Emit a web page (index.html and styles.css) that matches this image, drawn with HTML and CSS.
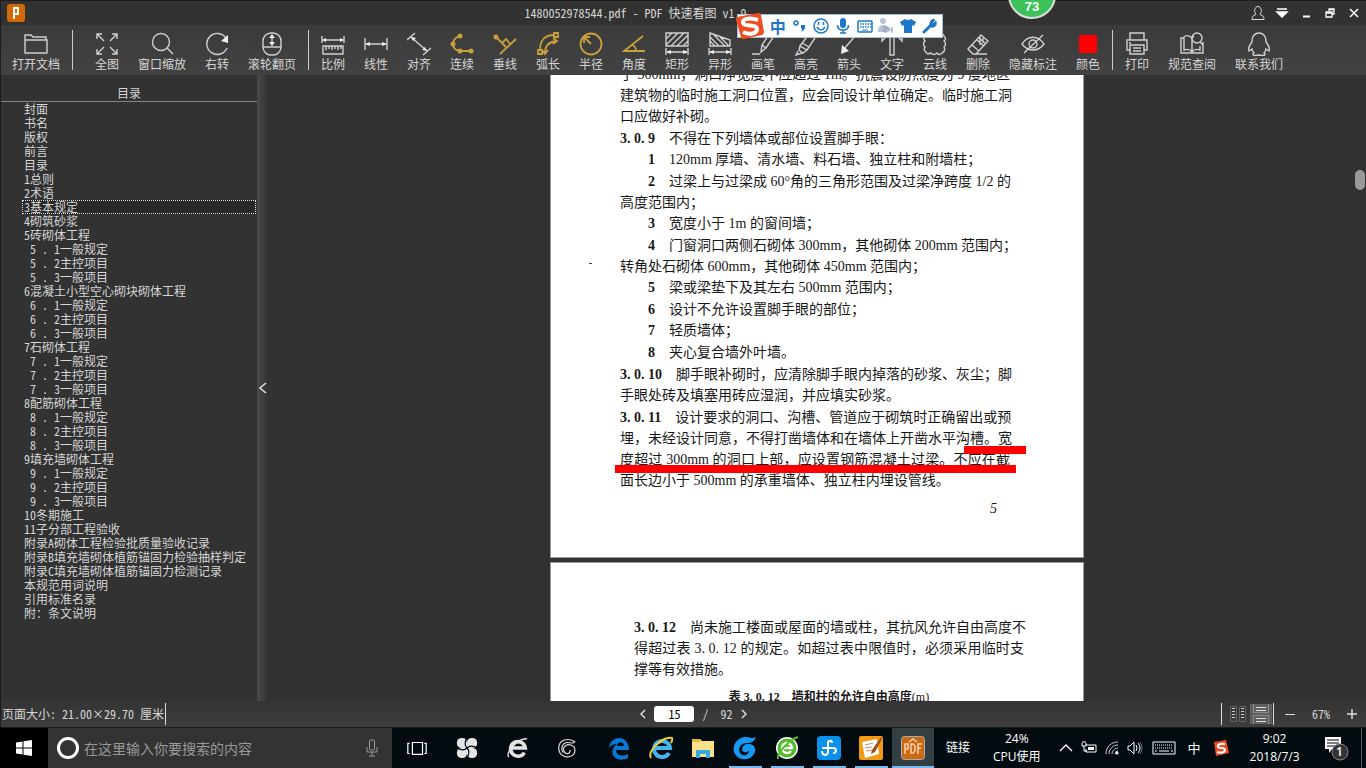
FILE: index.html
```html
<!DOCTYPE html>
<html lang="zh-CN">
<head>
<meta charset="utf-8">
<title>1480052978544.pdf - PDF 快速看图 v1.9</title>
<link rel="stylesheet" href="styles.css">
</head>
<body>
<div class="desktop">
<div class="window">
  <header class="titlebar">
    <svg class="app-icon" viewBox="0 0 18 18"><rect width="18" height="18" rx="3" fill="#d26a08"/><path d="M7 15V4h4v6H8" fill="none" stroke="#fff" stroke-width="2"/></svg>
    <h1 class="title">1480052978544.pdf - PDF 快速看图 v1.9</h1>
    <div class="controls">
      <button aria-label="用户"><svg viewBox="0 0 16 16"><path d="M5.500 8.500C4 7 4.500 1.500 8 1.500S12 7 10.500 8.500L10 9.500c3 1 4 2 4 5H2c0-3 1-4 4-5z" fill="none" stroke="#ddd"/></svg></button>
      <button aria-label="菜单"><svg viewBox="0 0 16 16"><path d="M3 4h10M3 7h10l-5 5z" fill="#fff" stroke="#fff" stroke-width="1.500"/></svg></button>
      <button aria-label="最小化"><svg viewBox="0 0 16 16"><path d="M5 11.500h7" stroke="#fff" stroke-width="2"/></svg></button>
      <button aria-label="还原"><svg viewBox="0 0 16 16"><path d="M7 6V4h5v5h-2M4 7h6v5H4zM4 8h6M7 4.500h5" fill="none" stroke="#fff" stroke-width="1.300"/></svg></button>
      <button aria-label="关闭"><svg viewBox="0 0 16 16"><path d="M4 4l8 8M12 4l-8 8" stroke="#fff" stroke-width="1.500"/></svg></button>
    </div>
  </header>

  <nav class="toolbar">
    <div class="group">
      <button class="tool wide"><svg viewBox="0 0 24 24"><path d="M1 21V3h6l2 2h13v3M1 8h22v13H1z"/></svg>打开文档</button>
    </div>
    <i class="sep"></i>
    <div class="group fit">
      <button class="tool"><svg viewBox="0 0 24 24"><path d="M9 9L2 2M2 7V2h5M15 9l7-7M17 2h5v5M9 15l-7 7M2 17v5h5M15 15l7 7M22 17v5h-5"/></svg>全图</button>
      <button class="tool wide"><svg viewBox="0 0 24 24"><circle cx="11" cy="10" r="8.500"/><path d="M17 16l6 6"/></svg>窗口缩放</button>
      <button class="tool"><svg viewBox="0 0 24 24"><path d="M21 6A10.500 10.500 0 1 0 22 16"/><path class="solid" d="M23 3v8l-7-2z"/></svg>右转</button>
      <button class="tool wide"><svg viewBox="0 0 24 24"><rect x="3" y="1" width="18" height="22" rx="8"/><path d="M3 15h18M12 4v8"/><path class="solid" d="M12 2l3 4H9zM12 14l3-4H9z"/></svg>滚轮翻页</button>
    </div>
    <i class="sep"></i>
    <div class="group">
      <button class="tool"><svg viewBox="0 0 24 24"><path d="M1 4v7M23 4v7M2 8h20M2 14h20v8H2zM5 14v4M8 14v3M11 14v4M14 14v3M17 14v4M20 14v3"/><path class="solid" d="M1 8l4-2v4zM23 8l-4-2v4z"/></svg>比例</button>
      <button class="tool"><svg viewBox="0 0 24 24"><path d="M1 6v12M23 6v12M2 12h20"/><path class="solid" d="M1 12l5-2v4zM23 12l-5-2v4z"/></svg>线性</button>
      <button class="tool"><svg viewBox="0 0 24 24"><path d="M0 8l8-7M16 23l8-7M4 5l16 14"/><path class="solid" d="M4 5l5 1-3 3zM20 19l-5-1 3-3z"/></svg>对齐</button>
      <button class="tool gold"><svg viewBox="0 0 24 24"><path d="M10 4Q3 6 3 12t7 7h11"/><circle class="solid" cx="10" cy="4" r="2.500"/><circle class="solid" cx="3" cy="12" r="2.500"/><circle class="solid" cx="10" cy="19" r="2.500"/><circle class="solid" cx="21" cy="19" r="2.500"/></svg>连续</button>
      <button class="tool gold"><svg viewBox="0 0 24 24"><path d="M3 5l11 11M7 22L23 7M9 11l4-4 4 5"/><circle class="solid" cx="3" cy="5" r="2.500"/></svg>垂线</button>
      <button class="tool gold"><svg viewBox="0 0 24 24"><path d="M4 18C4 8 9 3 18 3M9 21c0-8 4-11 11-12M2 18h4v4H2zM18 1h4v4h-4zM17 6l4 3-4 3M6 18l3 4 3-4"/></svg>弧长</button>
      <button class="tool gold"><svg viewBox="0 0 24 24"><circle cx="12" cy="12" r="10.500"/><path d="M12 12L5 5M5 11V5h6"/></svg>半径</button>
      <button class="tool gold"><svg viewBox="0 0 24 24"><path d="M21 4L2 19h21M10 13c3 1 4 3 4 6"/></svg>角度</button>
      <button class="tool"><svg viewBox="0 0 24 24"><path d="M1 1h22v13H1zM1 7l6-6M1 13L13 1M6 14L19 1M12 14L23 3M18 14l5-5M1 16v7M23 16v7M2 20h20"/><path class="solid" d="M1 20l5-2v4zM23 20l-5-2v4z"/></svg>矩形</button>
      <button class="tool"><svg viewBox="0 0 24 24"><path d="M2 1l20 7v6H2zM2 5l9 9M2 9l5 5M5 2l12 12M12 5l9 9M1 16v7M23 16v7M2 20h20"/><path class="solid" d="M1 20l5-2v4zM23 20l-5-2v4z"/></svg>异形</button>
      <button class="tool"><svg viewBox="0 0 24 24"><path d="M10 20l1-7 8-12 4 3-8 12zM1 22h8M11 13l4 3"/></svg>画笔</button>
      <button class="tool"><svg viewBox="0 0 24 24"><path d="M6 14l9-12 6 4-8 12zM6 14l-1 4 4 3 4-3M4 19l-2 4 6-2M8 11l7 4"/></svg>高亮</button>
      <button class="tool"><svg viewBox="0 0 24 24"><path d="M20 2L6 18"/><path class="solid" d="M4 22l1-9 7 6z"/></svg>箭头</button>
      <button class="tool"><svg viewBox="0 0 24 24"><path d="M2 3h20v6l-4-4h-4v18h-4V5H6L2 9z"/></svg>文字</button>
      <button class="tool"><svg viewBox="0 0 24 24"><path d="M4 3q3-3 5 0 3-3 6 0 4-3 6 1 3 3 0 5 3 3 0 6 2 4-2 6-3 3-5 0-3 3-6 0-4 2-5-1-3-2-1-5-3-3 0-6-3-3 2-6z"/></svg>云线</button>
      <button class="tool"><svg viewBox="0 0 24 24"><path d="M2 17L15 3l7 6L10 22H7zM6 13l7 6M7 22h14M11 8l7 6M13 6l7 6M14 13V5M17 11V6"/></svg>删除</button>
      <button class="tool wide"><svg viewBox="0 0 24 24"><path d="M1 12C7 3 17 3 23 12 17 20 7 20 1 12zM3 21L22 3"/><circle cx="12" cy="12" r="4"/></svg>隐藏标注</button>
      <button class="tool"><svg viewBox="0 0 24 24"><rect x="3" y="3" width="18" height="18" rx="2" fill="#f00" stroke="none"/></svg>颜色</button>
    </div>
    <i class="sep"></i>
    <div class="group">
      <button class="tool"><svg viewBox="0 0 24 24"><path d="M5 8V1h14v7M5 18H2V8h20v10h-3M5 13h14v9H5zM8 16h8M8 19h8M4 11h2"/></svg>打印</button>
      <button class="tool wide"><svg viewBox="0 0 24 24"><path d="M12 21V6C9 3 6 3 4 5v13c3-1 6-1 8 2 2-3 5-3 8-2v-4M4 6H1v15h22V10M12 6l2-2"/><circle cx="17" cy="6" r="5"/><path d="M20 10l3 3"/></svg>规范查阅</button>
      <button class="tool wide"><svg viewBox="0 0 24 24"><path d="M5 10C4-2 20-2 19 10c3 4 4 7 3 9l-3-2c0 2-1 3-2 4 3 2 0 3-5 2-5 1-8 0-5-2-1-1-2-2-2-4l-3 2c-1-2 0-5 3-9z"/></svg>联系我们</button>
    </div>
  </nav>

  <main class="main">
    <aside class="sidebar">
      <h2>目录</h2>
      <ul class="toc">
        <li><a href="#">封面</a></li>
        <li><a href="#">书名</a></li>
        <li><a href="#">版权</a></li>
        <li><a href="#">前言</a></li>
        <li><a href="#">目录</a></li>
        <li><a href="#">1总则</a></li>
        <li><a href="#">2术语</a></li>
        <li><a href="#" class="current">3基本规定</a></li>
        <li><a href="#">4砌筑砂浆</a></li>
        <li><a href="#">5砖砌体工程</a></li>
        <li><a href="#" class="sub">5 . 1一般规定</a></li>
        <li><a href="#" class="sub">5 . 2主控项目</a></li>
        <li><a href="#" class="sub">5 . 3一般项目</a></li>
        <li><a href="#">6混凝土小型空心砌块砌体工程</a></li>
        <li><a href="#" class="sub">6 . 1一般规定</a></li>
        <li><a href="#" class="sub">6 . 2主控项目</a></li>
        <li><a href="#" class="sub">6 . 3一般项目</a></li>
        <li><a href="#">7石砌体工程</a></li>
        <li><a href="#" class="sub">7 . 1一般规定</a></li>
        <li><a href="#" class="sub">7 . 2主控项目</a></li>
        <li><a href="#" class="sub">7 . 3一般项目</a></li>
        <li><a href="#">8配筋砌体工程</a></li>
        <li><a href="#" class="sub">8 . 1一般规定</a></li>
        <li><a href="#" class="sub">8 . 2主控项目</a></li>
        <li><a href="#" class="sub">8 . 3一般项目</a></li>
        <li><a href="#">9填充墙砌体工程</a></li>
        <li><a href="#" class="sub">9 . 1一般规定</a></li>
        <li><a href="#" class="sub">9 . 2主控项目</a></li>
        <li><a href="#" class="sub">9 . 3一般项目</a></li>
        <li><a href="#">10冬期施工</a></li>
        <li><a href="#">11子分部工程验收</a></li>
        <li><a href="#">附录A砌体工程检验批质量验收记录</a></li>
        <li><a href="#">附录B填充墙砌体植筋锚固力检验抽样判定</a></li>
        <li><a href="#">附录C填充墙砌体植筋锚固力检测记录</a></li>
        <li><a href="#">本规范用词说明</a></li>
        <li><a href="#">引用标准名录</a></li>
        <li><a href="#">附：条文说明</a></li>
      </ul>
    </aside>
    <button class="splitter" aria-label="收起目录"><svg viewBox="0 0 8 12"><path d="M7 1L1 6l6 5" fill="none" stroke="#ddd" stroke-width="1.500"/></svg></button>
    <section class="viewer">
      <div class="pages">
        <article class="page first">
          <p class="clause"><span class="full">于 300mm，洞口净宽度不应超过 1m。抗震设防烈度为 9 度地区</span><span class="full">建筑物的临时施工洞口位置，应会同设计单位确定。临时施工洞</span><span>口应做好补砌。</span></p>
          <p class="clause"><span><b>3. 0. 9</b>不得在下列墙体或部位设置脚手眼：</span></p>
          <p class="item"><span><b>1</b>120mm 厚墙、清水墙、料石墙、独立柱和附墙柱；</span></p>
          <p class="item"><span><b>2</b>过梁上与过梁成 60°角的三角形范围及过梁净跨度 1/2 的</span><span>高度范围内；</span></p>
          <p class="item"><span><b>3</b>宽度小于 1m 的窗间墙；</span></p>
          <p class="item"><span><b>4</b>门窗洞口两侧石砌体 300mm，其他砌体 200mm 范围内；</span><span>转角处石砌体 600mm，其他砌体 450mm 范围内；</span></p>
          <p class="item"><span><b>5</b>梁或梁垫下及其左右 500mm 范围内；</span></p>
          <p class="item"><span><b>6</b>设计不允许设置脚手眼的部位；</span></p>
          <p class="item"><span><b>7</b>轻质墙体；</span></p>
          <p class="item"><span><b>8</b>夹心复合墙外叶墙。</span></p>
          <p class="clause"><span><b>3. 0. 10</b>脚手眼补砌时，应清除脚手眼内掉落的砂浆、灰尘；脚</span><span>手眼处砖及填塞用砖应湿润，并应填实砂浆。</span></p>
          <p class="clause"><span><b>3. 0. 11</b>设计要求的洞口、沟槽、管道应于砌筑时正确留出或预</span><span>埋，未经设计同意，不得打凿墙体和在墙体上开凿水平沟槽。宽</span><span class="full">度超过 300mm 的洞口上部，应设置钢筋混凝土过梁。不应在截</span><span>面长边小于 500mm 的承重墙体、独立柱内埋设管线。</span></p>
          <p class="folio">5</p>
          <i class="mark mark-a"></i><i class="mark mark-b"></i><i class="speck"></i>
        </article>
        <article class="page second">
          <p class="clause"><span><b>3. 0. 12</b>尚未施工楼面或屋面的墙或柱，其抗风允许自由高度不</span><span class="full">得超过表 3. 0. 12 的规定。如超过表中限值时，必须采用临时支</span><span>撑等有效措施。</span></p>
          <p class="caption"><b>表 3. 0. 12</b><b>墙和柱的允许自由高度</b>(m)</p>
        </article>
      </div>
      <i class="thumb"></i>
    </section>
  </main>

  <footer class="status">
    <span class="size">页面大小: 21.00×29.70 厘米</span>
    <div class="pager">
      <button aria-label="上一页"><svg viewBox="0 0 6 10"><path d="M5 1L1 5l4 4" fill="none" stroke="#ddd" stroke-width="1.500"/></svg></button>
      <input aria-label="页码" value="15">
      <span>/</span><span>92</span>
      <button aria-label="下一页"><svg viewBox="0 0 6 10"><path d="M1 1l4 4-4 4" fill="none" stroke="#ddd" stroke-width="1.500"/></svg></button>
    </div>
    <div class="view">
      <button class="mode" aria-label="双页"><svg viewBox="0 0 22 20"><path d="M3.500 2.500h6v15h-6zM12.500 2.500h6v15h-6z" fill="none" stroke="#606060"/><path d="M6.500 4v12M15.500 4v12" stroke="#ccc" stroke-width="3" stroke-dasharray="1 2"/></svg></button>
      <button class="mode on" aria-label="连续"><svg viewBox="0 0 22 20"><path d="M3.500 0v8.500h15V0M3.500 20v-8.500h15V20" fill="none" stroke="#8a8a8a"/><path d="M6 3.500h10M6 6.500h10M6 14.500h10M6 17.500h10" stroke="#ddd"/></svg></button>
      <div class="zoom">
        <button aria-label="缩小"><svg viewBox="0 0 10 10"><path d="M0 5.500h10" stroke="#ddd"/></svg></button>
        <span>67%</span>
        <button aria-label="放大"><svg viewBox="0 0 10 10"><path d="M0 5h10M5 0v10" stroke="#ddd" stroke-width="1.500"/></svg></button>
      </div>
    </div>
  </footer>
</div>

<div class="taskbar">
  <button class="start" aria-label="开始"><svg viewBox="0 0 16 16"><path d="M0 2.500l6.500-1v6H0zM7.500 1.300L16 0v7.500H7.500zM0 8.500h6.500v6L0 13.500zM7.500 8.500H16V16l-8.500-1.300z" fill="#fff"/></svg></button>
  <label class="search">
    <i class="ring"></i>
    <input placeholder="在这里输入你要搜索的内容">
    <svg viewBox="0 0 12 18"><rect x="3.500" y="1" width="5" height="10" rx="1" fill="none" stroke="#999"/><path d="M1 8v5h10V8M6 13v4M3 17h6" fill="none" stroke="#999"/></svg>
  </label>
  <div class="apps early">
    <button aria-label="任务视图"><svg viewBox="0 0 24 24"><path d="M7 6h11v13H7zM4 7H2v11h2M20 7h2v11h-2" fill="none" stroke="#fff" stroke-width="1.300"/></svg></button>
    <button aria-label="风扇"><svg viewBox="0 0 24 24"><g fill="#e4e4e4"><rect x="1" y="1" width="11" height="11" rx="5"/><rect x="12" y="1" width="11" height="11" rx="5"/><rect x="1" y="12" width="11" height="11" rx="5"/><rect x="12" y="12" width="11" height="11" rx="5"/><path d="M7 7h10v10H7z"/></g><path d="M12 12Q8 8 12 1M12 12q4-4 11 0M12 12q4 4 0 11M12 12q-4 4-11 0" fill="none" stroke="#020c10" stroke-width="1.300"/></svg></button>
    <button aria-label="浏览器"><svg viewBox="0 0 24 24"><path d="M20 17a8 8 0 1 1 1-5H7" fill="none" stroke="#e4e4e4" stroke-width="4"/><path d="M3 22C-1 16 14 1 23 2" fill="none" stroke="#e4e4e4" stroke-width="1.500"/></svg></button>
    <button aria-label="加速"><svg viewBox="0 0 24 24"><path d="M20 5C12 0 3 4 3 12s7 11 13 9 6-10 1-12-11 2-8 7 8 0 6-2M21 5c-3 3-6 1-8 1-7 0-8 8-5 11" fill="none" stroke="#ddd" stroke-width="1.300"/></svg></button>
  </div>
  <div class="apps pinned">
    <button aria-label="Edge"><svg viewBox="0 0 24 24"><path d="M2 12C4-2 22-1 22 14H9c0 6 7 7 12 4v4C11 27 3 20 6 13c1-3 4-5 4-5-4 0-6 1-8 4zm8-2h7c0-5-7-5-7 0z" fill="#0878d8"/></svg></button>
    <button aria-label="Internet Explorer"><svg viewBox="0 0 24 24"><path d="M20 17a8 8 0 1 1 1-5H7" fill="none" stroke="#45b5ef" stroke-width="4"/><path d="M2 22C-2 15 14 0 23 2c1 1 0 3-1 5" fill="none" stroke="#f7cc31" stroke-width="2"/></svg></button>
    <button aria-label="资源管理器"><svg viewBox="0 0 24 24"><path d="M1 3h8l2 2h12v16H1z" fill="#fbe08a"/><path d="M1 3h8v3H1z" fill="#e8b83c"/><path d="M5 22v-8h14v8h-4v-4H9v4z" fill="#38a9e0"/></svg></button>
    <button class="running" aria-label="快速浏览器"><svg viewBox="0 0 24 24"><path d="M23 1C18 4 15-1 8 2 1 5-1 13 2 18c4 7 15 7 19 0 3-5 0-10-5-10-6-1-9 6-5 8 2 1 4 0 5-2 0 5-5 7-8 4-4-4-1-11 6-11 4 0 7-1 9-6z" fill="#1798f5"/></svg></button>
    <button class="running" aria-label="安全浏览器"><svg viewBox="0 0 24 24"><circle cx="12" cy="12" r="11" fill="#fff"/><circle cx="12" cy="12" r="9.500" fill="#55b92d"/><path d="M16 15a5 5 0 1 1 1-3H8" fill="none" stroke="#fff" stroke-width="2.500"/><path d="M3 23C1 18 15 3 23 1" fill="none" stroke="#51bd24" stroke-width="2"/></svg></button>
    <button class="running" aria-label="看图"><svg viewBox="0 0 24 24"><rect width="24" height="24" rx="4" fill="#0a91ee"/><path d="M15 7c0-3-4-3-4 0v9c0 4-6 4-6-1M5 12h11c4 0 4 5 0 5" fill="none" stroke="#fff" stroke-width="2"/></svg></button>
    <button class="running" aria-label="笔记"><svg viewBox="0 0 24 24"><rect width="24" height="24" rx="2" fill="#f39a14"/><path d="M3 6l15-3 2 15-14 4z" fill="#fff"/><path d="M6 9l8-2M6 12l7-1M7 15l6-1" stroke="#b69a72"/><path d="M22 1l-9 13-1 4 4-2 7-13z" fill="#9c4e16"/></svg></button>
    <button class="running active" aria-label="PDF 快速看图"><svg viewBox="0 0 24 24"><rect x=".5" y=".5" width="23" height="23" rx="3" fill="#cc690f" stroke="#aaa"/><path d="M4 18V8h3v5H4M10 8v9h2l2-2v-5l-2-2zM17 18V8h4M17 12h3M8 6l4-3 4 3" fill="none" stroke="#f2d2b5" stroke-width="1.500"/></svg></button>
  </div>
  <div class="tray">
    <span class="links">链接</span>
    <span class="cpu">24%<br>CPU使用</span>
    <svg class="s16" viewBox="0 0 16 16"><path d="M2 11l6-6 6 6" fill="none" stroke="#fff" stroke-width="1.300"/></svg>
    <svg class="s16" viewBox="0 0 16 16"><path d="M5 5h10v7H5v-3M1 3v3h4V3M2 1v2M4 1v2M3 6v5h3" fill="none" stroke="#fff"/><path d="M7 7h6v3H7z" fill="#fff"/></svg>
    <svg class="s16" viewBox="0 0 16 16"><path d="M2 14C2 7 7 2 14 2M5 14c0-5 4-9 9-9M8 14c0-3 3-6 6-6M11 14q0-3 3-3" fill="none" stroke="#ccc"/><circle cx="13" cy="13" r="1.500" fill="#fff"/></svg>
    <svg class="s16" viewBox="0 0 16 16"><path d="M1 6h2l4-4v12l-4-4H1zM9 5q2 3 0 6M11 3q4 5 0 10" fill="none" stroke="#fff"/><path d="M13 2q4 6 0 12" fill="none" stroke="#777"/></svg>
    <svg class="keyboard" viewBox="0 0 24 14"><path d="M1 1h22v12H1z" fill="none" stroke="#fff"/><path d="M3 4h18M3 7h18" stroke="#fff" stroke-dasharray="1 1"/><path d="M3 10h2M7 10h10M19 10h2" stroke="#fff"/></svg>
    <span class="ime">中</span>
    <svg class="s16" viewBox="0 0 16 16"><path d="M1 2l12-2 3 13-13 3z" fill="#f04b20"/><path d="M12 4C7 3 4 5 5 7s7 0 7 3-5 3-8 2" fill="none" stroke="#fff" stroke-width="2"/></svg>
    <span class="clock">9:02<br>2018/7/3</span>
    <button class="notice" aria-label="通知"><svg viewBox="0 0 26 26"><path d="M2 2h16v12h-9l-3 4v-4H2z" fill="#fff"/><path d="M4 5h12M4 8h12M4 11h8" stroke="#000"/><circle cx="17" cy="17" r="8" fill="#333" stroke="#888"/></svg><b>1</b></button>
    <i class="edge"></i>
  </div>
</div>

<div class="ball">73</div>
<div class="sogou">
  <svg class="logo" viewBox="0 0 28 28"><path d="M1 5l22-4q2 0 2 2l3 17q0 2-2 3L8 27q-3 0-3-2L0 8q0-2 1-3z" fill="#ef4c1f"/><path d="M22 8C13 5 6 7 7 11s14 1 14 6-8 6-14 3" fill="none" stroke="#fff" stroke-width="4"/></svg>
  <span>中</span>
  <svg viewBox="0 0 16 16"><circle cx="5" cy="5" r="2" fill="none" stroke="#1d77c9" stroke-width="1.500"/><path d="M10 7h4q1 5-4 7 2-3 0-4z" fill="#1d77c9"/></svg>
  <svg viewBox="0 0 16 16"><circle cx="8" cy="8" r="7" fill="none" stroke="#1d77c9" stroke-width="1.500"/><path d="M5.500 4v3M10.500 4v3M4 9q4 6 8 0" fill="none" stroke="#1d77c9" stroke-width="1.500"/></svg>
  <svg viewBox="0 0 16 16"><rect x="5" y="0" width="6" height="10" rx="3" fill="#1d77c9"/><path d="M2.500 7q0 5 5.500 5t5.500-5M8 12v3M5 15h6" fill="none" stroke="#1d77c9" stroke-width="1.500"/></svg>
  <svg viewBox="0 0 16 16"><rect x="1" y="3" width="14" height="11" rx="1" fill="none" stroke="#1d77c9" stroke-width="1.500"/><path d="M3 6h11M3 9h11" stroke="#1d77c9" stroke-width="1.500" stroke-dasharray="1.500 1"/><path d="M5 12h6" stroke="#1d77c9"/></svg>
  <svg viewBox="0 0 16 16"><circle cx="5" cy="3" r="3" fill="#b8c2d6"/><path d="M0 14q0-7 5-7t6 4v3z" fill="#b8c2d6"/><path d="M5 9h4v2H6v3h3M11 9v3h4M14 9v6" fill="none" stroke="#8798bd"/></svg>
  <svg viewBox="0 0 16 16"><path d="M5 1q3 2 6 0l5 3-2 4-2-1v8H4V7L2 8 0 4z" fill="#1d77c9"/></svg>
  <svg viewBox="0 0 16 16"><path d="M2 14l7-7" stroke="#1d77c9" stroke-width="3" stroke-linecap="round"/><path d="M14 3l-3 3-1-1 3-3Q9 0 8 5t3 4q4 0 3-6z" fill="#1d77c9" stroke="#1d77c9"/></svg>
</div>
</div>
</body>
</html>
```
FILE: styles.css
```css
* { box-sizing: border-box; }
body { margin: 0; background: #000; }
button { padding: 0; border: 0; background: none; color: inherit; font: inherit; display: flex; align-items: center; justify-content: center; }
input { padding: 0; border: 0; font: inherit; }
h1, h2, p, ul { margin: 0; padding: 0; font-weight: 400; font-size: inherit; }
i { font-style: normal; }
svg { display: block; flex: none; }

.desktop { position: relative; height: 100vh; display: flex; flex-direction: column; overflow: hidden; }
.window {
  flex: 1; min-height: 0; display: flex; flex-direction: column;
  background: #323232; color: #d6d6d6; border-top: 1px solid #1c1c1c; border-left: 1px solid #1c1c1c;
  font: 12px/14px "Noto Sans CJK SC", sans-serif; font-feature-settings: "hwid";
}

.titlebar { display: flex; align-items: center; height: 24px; padding-left: 6px; }
.app-icon { width: 18px; height: 18px; }
.title { flex: 1; text-align: center; }
.controls { display: flex; }
.controls button { width: 24px; }
.controls svg { width: 16px; height: 16px; }

.toolbar { display: flex; height: 50px; padding: 5px 0 0 11px; background: linear-gradient(#3b3b3b, #424242); }
.group { display: flex; gap: 19px; }
.fit { padding-left: 10px; }
.sep { width: 1px; height: 40px; margin: 0 12px; background: #ccc; }
.tool { flex-direction: column; justify-content: flex-start; gap: 1px; width: 24px; padding-top: 2px; white-space: nowrap; }
.tool.wide { width: 48px; }
.tool svg { width: 24px; height: 24px; fill: none; stroke: #d0d0d0; stroke-width: 1.4; color: #eee; }
.tool .solid { fill: currentColor; stroke: none; }
.gold svg { stroke: #c9a03c; stroke-width: 1.8; color: #c9a03c; }

.main { flex: 1; min-height: 0; display: flex; }
.sidebar { width: 256px; overflow: hidden; }
.sidebar h2 { padding: 11px 0 1px; border-bottom: 1px solid #858585; text-align: center; }
.toc { list-style: none; padding: 0 1px 0 21px; }
.toc a { display: block; padding-left: 2px; color: inherit; text-decoration: none; white-space: nowrap; }
.toc .sub { padding-left: 8px; }
.toc .current { background: #282828; outline: 1px dotted #ddd; outline-offset: -1px; }
.splitter { width: 11px; background: linear-gradient(90deg, #4a4a4a, #323232); }
.splitter svg { width: 8px; height: 12px; }
.viewer { position: relative; flex: 1; overflow: hidden; }
.pages { display: flex; flex-direction: column; align-items: center; gap: 4px; margin-top: -13px; }
.page { position: relative; width: 534px; background: #fff; color: #181818; border: 1px solid #999; font: 14px/21px "Liberation Serif", "Noto Sans CJK SC", serif; font-feature-settings: normal; }
.first { padding: 0 73px 38px 69px; }
.second { padding: 53px 59px 40px 83px; }
.page span { display: block; white-space: nowrap; }
.page .full { text-align-last: justify; }
.clause { padding-top: 1px; }
.clause b { margin-right: 14px; }
.item:nth-child(even) { padding-top: 1px; }
.item b { margin: 0 14px 0 28px; }
.folio { padding: 7px 13px 0 0; text-align: right; font-style: italic; }
.caption { padding-top: 7px; text-align: center; white-space: nowrap; font-size: 12px; }
.caption b + b { margin-left: 12px; }
.mark { position: absolute; height: 8px; background: #f00; }
.mark-a { top: 383px; left: 413px; width: 62px; }
.mark-b { top: 402px; left: 64px; width: 401px; }
.speck { position: absolute; top: 200px; left: 38px; width: 3px; height: 1px; background: #444; }
.thumb { position: absolute; top: 95px; right: 1px; width: 10px; height: 20px; border-radius: 5px; background: #999; }

.status { display: flex; align-items: center; height: 27px; padding-left: 1px; background: linear-gradient(#343434, #3e3e3e); border-bottom: 1px solid #1c1c1c; }
.size { padding: 4px 1px 4px 0; border-right: 1px solid #ddd; }
.pager { flex: 1; display: flex; align-items: center; justify-content: center; gap: 8px; }
.pager svg { width: 6px; height: 10px; }
.pager input { width: 40px; height: 16px; padding-bottom: 2px; border-radius: 3px; background: #fff; color: #000; text-align: center; font-feature-settings: "hwid"; }
.pager span + span { padding-left: 4px; }
.view { display: flex; align-items: center; border-left: 1px solid #ddd; }
.mode { width: 22px; height: 20px; margin-left: 5px; }
.mode svg { width: 22px; height: 20px; }
.mode.on { margin: 0 1px; background: #606060; }
.zoom { display: flex; align-items: center; gap: 17px; height: 22px; padding: 0 9px 0 11px; border-left: 1px solid #ddd; }
.zoom svg { width: 10px; height: 10px; }

.taskbar { display: flex; height: 40px; background: #020c10; color: #fff; font: 12px/18px "Open Sans", "Noto Sans CJK SC", sans-serif; }
.start { width: 48px; background: #000; }
.start svg { width: 16px; height: 16px; }
.search { display: flex; align-items: center; width: 344px; padding: 0 14px 0 9px; background: #333; }
.ring { width: 22px; height: 22px; border: 3px solid #fff; border-radius: 50%; }
.search input { flex: 1; min-width: 0; margin-left: 5px; background: none; color: #fff; font: 14px/20px "Noto Sans CJK SC", sans-serif; }
.search input::placeholder { color: #999; opacity: 1; }
.search svg { width: 12px; height: 18px; }
.apps { display: flex; }
.apps button { width: 42px; }
.apps svg { width: 24px; height: 24px; }
.apps.early button { width: 50px; }
.early svg { width: 22px; height: 22px; }
.pinned { padding-left: 6px; }
.apps .running { background: linear-gradient(#76b9ed, #76b9ed) center bottom / 33px 2px no-repeat; }
.apps .active { background: linear-gradient(#76b9ed, #76b9ed) center bottom / 42px 2px no-repeat #343f43; }
.tray { flex: 1; display: flex; align-items: center; gap: 7px; text-align: center; white-space: nowrap; }
.links { margin-left: 12px; }
.cpu { margin: 0 10px 0 16px; }
.s16 { width: 16px; height: 16px; }
.keyboard { width: 24px; height: 14px; margin-left: 2px; }
.ime { margin: 0 5px; font-size: 13px; }
.clock { margin: 0 auto 0 14px; }
.notice { position: relative; width: 26px; height: 26px; }
.notice svg { width: 26px; height: 26px; }
.notice b { position: absolute; left: 13px; top: 8px; font-weight: 600; }
.edge { width: 1px; height: 40px; margin: 0 4px 0 5px; background: #555; }

.ball { position: absolute; left: 1008px; top: -29px; width: 48px; height: 48px; padding-top: 27px; border: 2px solid #ddd; border-radius: 50%; background: #3cc15a; color: #fff; text-align: center; font: bold 13px/14px "Liberation Sans", sans-serif; }
.sogou { position: absolute; left: 737px; top: 14px; display: flex; align-items: center; justify-content: space-between; width: 206px; height: 24px; padding: 0 4px 0 0; border: 1px solid #aebfd0; background: #fff; color: #1d77c9; font: bold 16px/20px "Noto Sans CJK SC", sans-serif; }
.sogou svg { width: 16px; height: 16px; }
.sogou .logo { width: 28px; height: 28px; margin-left: -2px; }
```
